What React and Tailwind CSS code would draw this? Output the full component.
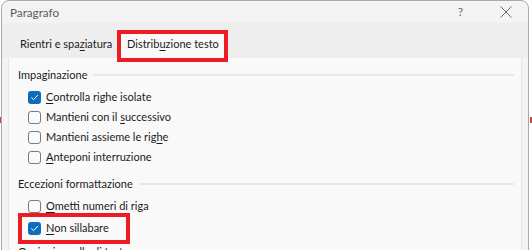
import React from 'react';

const font = "font-['Lato','Noto_Sans',sans-serif]";

function Check({ checked }) {
  if (checked) {
    return (
      <span className="w-[13px] h-[13px] rounded-[3px] bg-[#0f6cbd] flex items-center justify-center shrink-0">
        <svg width="9" height="9" viewBox="0 0 9 9" fill="none">
          <path d="M1.6 4.8 L3.6 6.7 L7.6 2.3" stroke="white" strokeWidth="1" strokeLinecap="round" strokeLinejoin="round" />
        </svg>
      </span>
    );
  }
  return <span className="w-[13px] h-[13px] rounded-[3px] border border-[#7a7a7a] bg-[#fbfbfb] shrink-0" />;
}

function Row({ checked, pre, acc, post, h = 'h-[20px]' }) {
  return (
    <div className={`${h} flex items-center gap-[5px] pl-[19px]`}>
      <Check checked={checked} />
      <span className="text-[11px] text-[#1b1b1b] leading-[14px] whitespace-nowrap">
        {pre}
        <span className="underline underline-offset-2">{acc}</span>
        {post}
      </span>
    </div>
  );
}

function Section({ title }) {
  return (
    <div className="h-[22px] flex items-center gap-[6px] pl-[9px] pr-[7px]">
      <span className="text-[11px] text-[#1b1b1b] leading-[14px] whitespace-nowrap">{title}</span>
      <span className="flex-1 h-[2px] bg-[#e8e8e8]" />
    </div>
  );
}

export default function App() {
  return (
    <div className={`w-[532px] h-[250px] bg-white relative overflow-hidden ${font}`}>
      {/* document marks behind the dialog */}
      <div className="absolute left-0 top-[117px] w-[1px] h-[6px] bg-[#e0403a]" />
      <div className="absolute left-[530px] top-[117px] w-[2px] h-[6px] bg-[#e0403a]" />

      <div className="ml-[1px] w-[528px] bg-[#f3f3f3] border border-[#a9a9a9] rounded-t-[8px] flex flex-col">
        {/* title bar */}
        <div className="h-[22px] shrink-0 flex items-center pl-[8px] pr-[16px]">
          <span className="text-[11.7px] text-[#5c5c5c] leading-[14px]">Paragrafo</span>
          <span className="ml-auto text-[12px] text-[#6a6a6a] mr-[37px] leading-[14px]">?</span>
          <svg width="12" height="12" viewBox="0 0 12 12" className="mb-[1px]">
            <path d="M0.5 0.5 L11.5 11.5 M11.5 0.5 L0.5 11.5" stroke="#6a6a6a" strokeWidth="1" />
          </svg>
        </div>

        {/* tabs */}
        <div className="h-[35px] shrink-0 bg-[#eeeeee] flex items-end pl-[7px]">
          <div className="h-[25px] w-[106px] pl-[11px] pb-[3px] flex items-center text-[11px] text-[#1b1b1b] leading-[14px] whitespace-nowrap">
            Rientri e spa<span className="underline underline-offset-2">z</span>iatura
          </div>
          <div className="h-[25px] w-[103px] ml-[6px] pl-[6px] pb-[3px] bg-[#f9f9f9] flex items-center text-[11px] text-[#1b1b1b] leading-[14px] whitespace-nowrap">
            Distrib<span className="underline underline-offset-2">u</span>zione testo
          </div>
        </div>

        {/* panel */}
        <div className="mx-[6px] bg-[#f9f9f9] border border-[#e6e6e6] border-t-0 pt-[6px] pb-[10px]">
          <Section title="Impaginazione" />
          <div className="pt-[1px]">
            <Row checked pre="" acc="C" post="ontrolla righe isolate" />
            <Row pre="Mantieni con il " acc="s" post="uccessivo" />
            <Row pre="Mantieni assieme le rig" acc="h" post="e" />
            <Row pre="" acc="A" post="nteponi interruzione" />
          </div>
          <div className="pt-[6px]">
            <Section title="Eccezioni formattazione" />
          </div>
          <div>
            <Row h="h-[22px]" pre="" acc="O" post="metti numeri di riga" />
            <Row h="h-[22px]" checked pre="" acc="N" post="on sillabare" />
          </div>
          <div className="pt-[2px]">
            <Section title="Opzioni casella di testo" />
          </div>
        </div>
      </div>

      {/* annotation boxes */}
      <div className="absolute left-[117px] top-[30px] w-[111px] h-[32px] border-[4px] border-[#ec1c24]" />
      <div className="absolute left-[18px] top-[213px] w-[112px] h-[31px] border-[4px] border-[#ec1c24]" />
    </div>
  );
}
